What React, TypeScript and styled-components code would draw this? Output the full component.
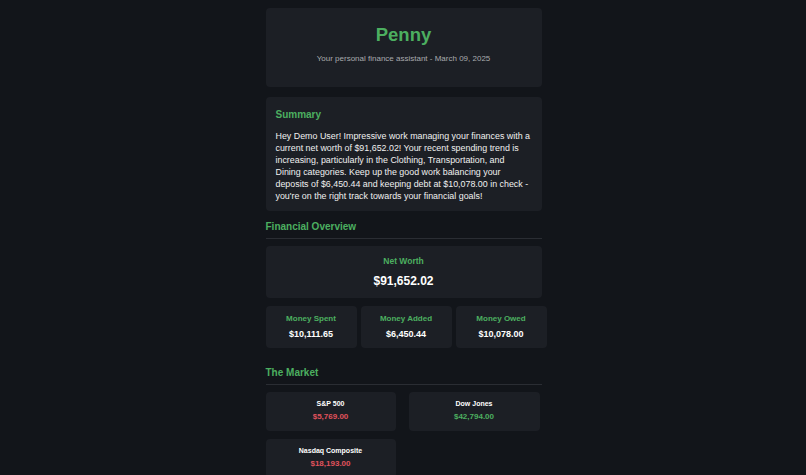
import styled, { createGlobalStyle } from 'styled-components'

const GlobalStyle = createGlobalStyle`
  html, body {
    margin: 0;
    padding: 0;
    background: #12151a;
    font-family: "Liberation Sans", Arial, sans-serif;
    color: #e8e8e8;
  }
`

const Page = styled.div`
  width: 276px;
  margin: 0 auto;
  padding: 8px 0 0 1px;
`

const Card = styled.div`
  background: #1c1f25;
  border-radius: 4px;
`

const Header = styled(Card)`
  height: 79px;
  box-sizing: border-box;
  padding-top: 15px;
  text-align: center;
`

const Title = styled.h1`
  margin: 0;
  font-size: 18.5px;
  font-weight: bold;
  color: #4caf60;
  line-height: 24px;
`

const Subtitle = styled.p`
  margin: 7px 0 0;
  font-size: 8px;
  color: #a9abae;
`

const Summary = styled(Card)`
  margin-top: 10px;
  padding: 11px 10px 9px;
`

const SummaryTitle = styled.h3`
  margin: 0 0 8px;
  font-size: 10px;
  font-weight: bold;
  color: #4caf60;
  line-height: 14px;
`

const SummaryText = styled.p`
  margin: 0;
  font-size: 8.9px;
  line-height: 12px;
  color: #f0f0f0;
`

const Section = styled.div<{ $top?: number }>`
  margin-top: ${(p) => p.$top ?? 9}px;
`

const SectionTitle = styled.h2`
  margin: 0;
  padding-bottom: 4px;
  font-size: 10px;
  font-weight: bold;
  color: #4caf60;
  line-height: 14px;
  border-bottom: 1px solid #2a2d33;
`

const NetWorth = styled(Card)`
  margin-top: 7px;
  height: 52px;
  box-sizing: border-box;
  padding-top: 10px;
  text-align: center;
`

const Label = styled.div<{ $size?: number }>`
  font-size: ${(p) => p.$size ?? 8}px;
  font-weight: bold;
  color: #4caf60;
`

const Value = styled.div<{ $size?: number; $gap?: number; $color?: string }>`
  margin-top: ${(p) => p.$gap ?? 6}px;
  font-size: ${(p) => p.$size ?? 9}px;
  font-weight: bold;
  color: ${(p) => p.$color ?? '#ffffff'};
`

const StatRow = styled.div`
  display: flex;
  gap: 4px;
  margin-top: 8px;
`

const Stat = styled(Card)`
  flex: 0 0 91px;
  height: 42px;
  box-sizing: border-box;
  padding-top: 8px;
  text-align: center;
`

const MarketGrid = styled.div`
  display: grid;
  grid-template-columns: 130px 131px;
  column-gap: 13px;
  row-gap: 8px;
  margin-top: 7px;
`

const Ticker = styled(Card)`
  height: 39px;
  box-sizing: border-box;
  padding-top: 8px;
  text-align: center;
`

const TickerName = styled.div`
  font-size: 7px;
  font-weight: bold;
  color: #ffffff;
`

const stats = [
  { label: 'Money Spent', value: '$10,111.65' },
  { label: 'Money Added', value: '$6,450.44' },
  { label: 'Money Owed', value: '$10,078.00' },
]

const market = [
  { name: 'S&P 500', value: '$5,769.00', up: false },
  { name: 'Dow Jones', value: '$42,794.00', up: true },
  { name: 'Nasdaq Composite', value: '$18,193.00', up: false },
]

function App() {
  return (
    <>
      <GlobalStyle />
      <Page>
        <Header>
          <Title>Penny</Title>
          <Subtitle>Your personal finance assistant - March 09, 2025</Subtitle>
        </Header>

        <Summary>
          <SummaryTitle>Summary</SummaryTitle>
          <SummaryText>
            Hey Demo User! Impressive work managing your finances with a current net worth of
            $91,652.02! Your recent spending trend is increasing, particularly in the Clothing,
            Transportation, and Dining categories. Keep up the good work balancing your deposits of
            $6,450.44 and keeping debt at $10,078.00 in check - you're on the right track towards
            your financial goals!
          </SummaryText>
        </Summary>

        <Section>
          <SectionTitle>Financial Overview</SectionTitle>
          <NetWorth>
            <Label $size={8.5}>Net Worth</Label>
            <Value $size={12} $gap={8}>$91,652.02</Value>
          </NetWorth>
          <StatRow>
            {stats.map((s) => (
              <Stat key={s.label}>
                <Label>{s.label}</Label>
                <Value>{s.value}</Value>
              </Stat>
            ))}
          </StatRow>
        </Section>

        <Section $top={18}>
          <SectionTitle>The Market</SectionTitle>
          <MarketGrid>
            {market.map((m) => (
              <Ticker key={m.name}>
                <TickerName>{m.name}</TickerName>
                <Value $size={8} $gap={5} $color={m.up ? '#4caf60' : '#e0525c'}>
                  {m.value}
                </Value>
              </Ticker>
            ))}
          </MarketGrid>
        </Section>
      </Page>
    </>
  )
}

export default App
